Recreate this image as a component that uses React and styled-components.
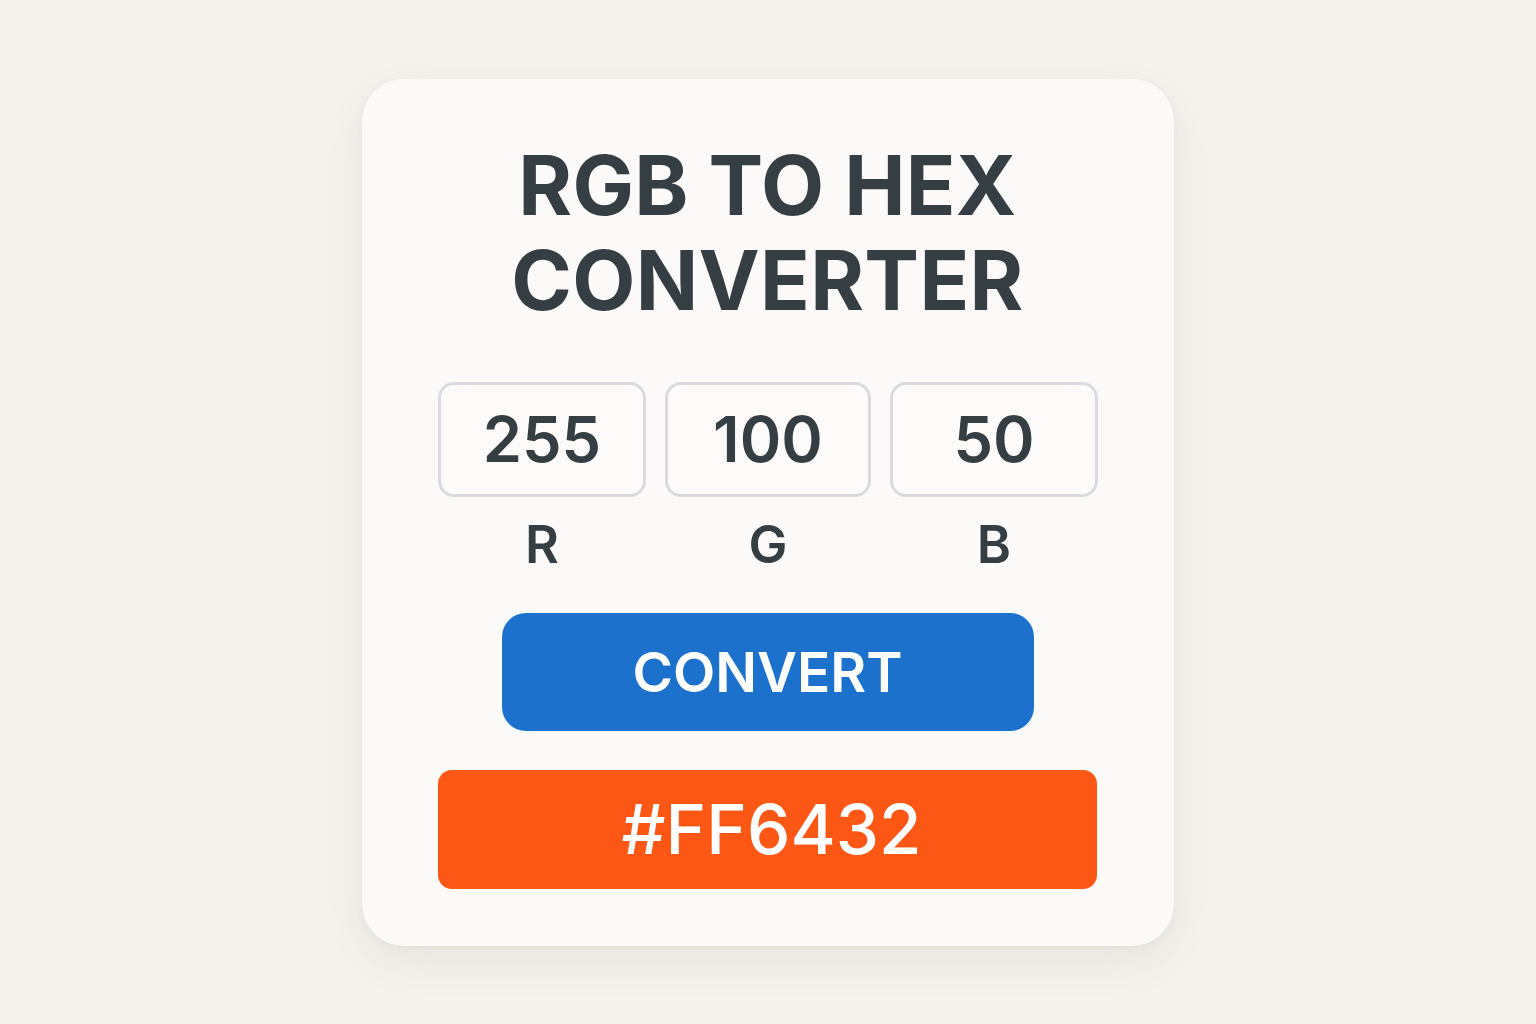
import React, { useState } from "react";
import styled, { createGlobalStyle } from "styled-components";

const GlobalStyle = createGlobalStyle`
  html, body {
    margin: 0;
    padding: 0;
    background: #f5f2ed;
  }

  body {
    font-family: Inter, "Noto Sans", "Liberation Sans", sans-serif;
    color: #353f43;
  }
`;

const Page = styled.div`
  min-height: 100vh;
  display: flex;
  align-items: center;
  justify-content: center;
`;

const Card = styled.div`
  width: 812px;
  box-sizing: border-box;
  padding: 59px 77px 57px 76px;
  background: #fbfaf8;
  border-radius: 42px;
  box-shadow: 0 16px 40px rgba(90, 80, 60, 0.08), 0 2px 8px rgba(90, 80, 60, 0.05);
  display: flex;
  flex-direction: column;
  align-items: center;
`;

const Title = styled.h1`
  margin: 0;
  font-size: 82px;
  line-height: 95px;
  font-weight: 650;
  letter-spacing: 0.3px;
  text-align: center;
  color: #353f43;
`;

const Channels = styled.div`
  margin-top: 54px;
  width: 100%;
  display: grid;
  grid-template-columns: 208px 206px 208px;
  column-gap: 19px;
`;

const Channel = styled.label`
  display: flex;
  flex-direction: column;
  align-items: center;
`;

const ValueInput = styled.input`
  width: 100%;
  height: 115px;
  box-sizing: border-box;
  border: 3px solid #d9dbe0;
  border-radius: 16px;
  background: #fcfbfa;
  font-family: inherit;
  font-size: 63px;
  font-weight: 600;
  color: #353f43;
  text-align: center;
  outline: none;
  padding: 0;
`;

const ChannelName = styled.span`
  margin-top: 18px;
  font-size: 52px;
  line-height: 60px;
  font-weight: 600;
  color: #353f43;
`;

const ConvertButton = styled.button`
  margin-top: 38px;
  width: 532px;
  height: 118px;
  border: none;
  border-radius: 24px;
  background: #1c71cc;
  color: #ffffff;
  font-family: inherit;
  font-size: 55px;
  font-weight: 600;
  cursor: pointer;
`;

const Result = styled.div`
  margin-top: 39px;
  width: 100%;
  height: 119px;
  border-radius: 14px;
  background: ${(p) => p.swatch};
  color: #ffffff;
  display: flex;
  align-items: center;
  justify-content: center;
  padding-left: 8px;
  box-sizing: border-box;
  font-size: 69px;
  font-weight: 500;
`;

const toHex = (values) =>
  "#" +
  values
    .map((v) => Math.max(0, Math.min(255, Number(v) || 0)).toString(16).padStart(2, "0"))
    .join("")
    .toUpperCase();

export default function App() {
  const [rgb, setRgb] = useState(["255", "100", "50"]);
  const [hex, setHex] = useState(toHex(["255", "100", "50"]));

  const update = (i) => (e) => {
    const next = [...rgb];
    next[i] = e.target.value;
    setRgb(next);
  };

  return (
    <>
      <GlobalStyle />
      <Page>
        <Card>
          <Title>
            RGB TO HEX
            <br />
            CONVERTER
          </Title>
          <Channels>
            {["R", "G", "B"].map((name, i) => (
              <Channel key={name}>
                <ValueInput value={rgb[i]} onChange={update(i)} />
                <ChannelName>{name}</ChannelName>
              </Channel>
            ))}
          </Channels>
          <ConvertButton onClick={() => setHex(toHex(rgb))}>CONVERT</ConvertButton>
          <Result swatch="#fd5716">{hex}</Result>
        </Card>
      </Page>
    </>
  );
}
